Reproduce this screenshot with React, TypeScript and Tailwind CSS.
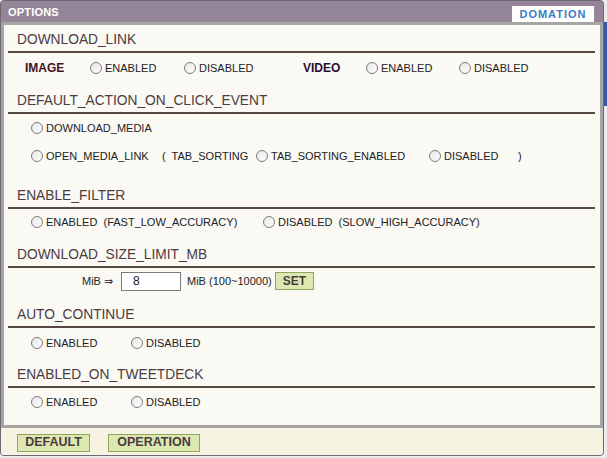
import React from "react";

const labelFont = { fontFamily: '"Liberation Sans", Arial, sans-serif' };

function Radio() {
  return (
    <span className="inline-block w-[12px] h-[12px] rounded-full border border-[#7c7c7c] bg-gradient-to-br from-[#e6e6e6] to-white shrink-0" />
  );
}

function Opt({ label, w }: { label: string; w?: string }) {
  return (
    <span className={`flex items-center shrink-0 ${w ?? ""}`}>
      <Radio />
      <span className="ml-[3px] text-[11px] leading-[14px] text-[#222] whitespace-pre">{label}</span>
    </span>
  );
}

function Heading({ text, h }: { text: string; h: string }) {
  return (
    <>
      <div className={`flex items-end pb-[3px] pl-[9px] ${h}`}>
        <span className="text-[13.75px] leading-[16px] text-[#4d3b42]">{text}</span>
      </div>
      <div className="h-[2px] bg-[#574842] mr-[5px]" />
    </>
  );
}

export default function App() {
  return (
    <div className="relative w-[607px] h-[458px] bg-[#ececec] overflow-hidden" style={labelFont}>
      <div className="absolute right-0 top-[22px] w-[4px] h-[84px] bg-[#3858a6]" />
      <div className="absolute left-0 top-0 w-[604px] h-[456px] rounded-[4px] border border-[#6e6870] bg-[#958598] flex flex-col overflow-hidden">
        {/* title bar */}
        <div className="h-[21px] flex items-start justify-between shrink-0">
          <span className="ml-[7px] mt-[5px] text-[11px] leading-[13px] font-bold text-white tracking-[0.2px]">
            OPTIONS
          </span>
          <span className="mt-[5px] mr-[9px] h-[16px] w-[82px] bg-white flex items-center justify-center text-[11px] font-bold tracking-[1px] text-[#3d7bc6]">
            DOMATION
          </span>
        </div>
        {/* panel */}
        <div className="h-[406px] shrink-0 border-[3px] border-[#a5a5a5] bg-[#faf9f4] pl-[4px] flex flex-col">
          <Heading text="DOWNLOAD_LINK" h="h-[26px]" />
          <div className="h-[30px] flex items-center pl-[17px]">
            <span className="w-[65px] shrink-0 text-[12px] font-bold text-[#45101e]">IMAGE</span>
            <Opt label="ENABLED" w="w-[94px]" />
            <Opt label="DISABLED" w="w-[119px]" />
            <span className="w-[63px] shrink-0 text-[12px] font-bold text-[#2a0c30]">VIDEO</span>
            <Opt label="ENABLED" w="w-[93px]" />
            <Opt label="DISABLED" />
          </div>

          <Heading text="DEFAULT_ACTION_ON_CLICK_EVENT" h="h-[29px]" />
          <div className="h-[28px] flex items-center pl-[23px]">
            <Opt label="DOWNLOAD_MEDIA" />
          </div>
          <div className="h-[28px] flex items-center pl-[23px]">
            <Opt label="OPEN_MEDIA_LINK" w="w-[131px]" />
            <span className="w-[94px] shrink-0 text-[11px] text-[#222] whitespace-pre">(  TAB_SORTING</span>
            <Opt label="TAB_SORTING_ENABLED" w="w-[173px]" />
            <Opt label="DISABLED" w="w-[89px]" />
            <span className="text-[11px] text-[#222]">)</span>
          </div>

          <Heading text="ENABLE_FILTER" h="h-[37px]" />
          <div className="h-[26px] flex items-center pl-[23px]">
            <Opt label="ENABLED  (FAST_LOW_ACCURACY)" w="w-[232px]" />
            <Opt label="DISABLED  (SLOW_HIGH_ACCURACY)" />
          </div>

          <Heading text="DOWNLOAD_SIZE_LIMIT_MB" h="h-[31px]" />
          <div className="h-[26px] flex items-center pl-[74px]">
            <span className="text-[11px] text-[#222] w-[39px] shrink-0">MiB ⇒</span>
            <span className="w-[60px] h-[19px] shrink-0 border border-[#7a7a7a] bg-white flex items-center pl-[11px] text-[12px] text-[#222]">
              8
            </span>
            <span className="ml-[6px] w-[88px] shrink-0 text-[11px] text-[#222]">MiB (100~10000)</span>
            <span className="w-[39px] h-[18px] shrink-0 border border-[#8fa562] bg-[#dde8b1] flex items-center justify-center text-[12px] font-bold text-[#4a3a40]">
              SET
            </span>
          </div>

          <Heading text="AUTO_CONTINUE" h="h-[32px]" />
          <div className="h-[30px] flex items-center pl-[23px]">
            <Opt label="ENABLED" w="w-[100px]" />
            <Opt label="DISABLED" />
          </div>

          <Heading text="ENABLED_ON_TWEETDECK" h="h-[28px]" />
          <div className="h-[28px] flex items-center pl-[23px]">
            <Opt label="ENABLED" w="w-[100px]" />
            <Opt label="DISABLED" />
          </div>
        </div>
        {/* footer */}
        <div className="flex-1 bg-[#f6f3e2] flex items-center pt-[2px] pl-[16px] gap-[18px]">
          <span className="w-[73px] h-[18px] border border-[#8fa562] bg-[#dde8b1] flex items-center justify-center text-[12.5px] font-bold text-[#4a3a40]">
            DEFAULT
          </span>
          <span className="w-[92px] h-[18px] border border-[#8fa562] bg-[#dde8b1] flex items-center justify-center text-[12.5px] font-bold text-[#4a3a40]">
            OPERATION
          </span>
        </div>
      </div>
    </div>
  );
}
